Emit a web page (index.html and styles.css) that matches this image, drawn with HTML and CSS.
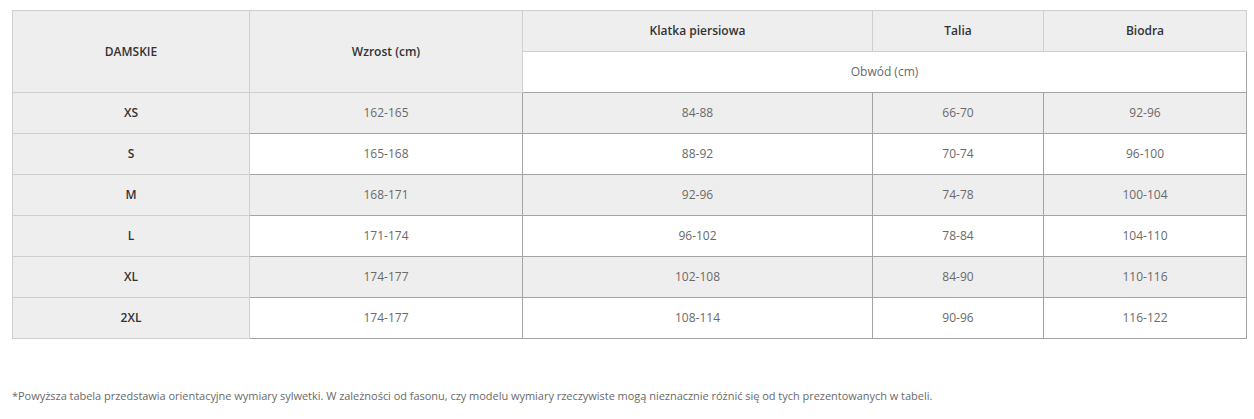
FILE: index.html
```html
<!DOCTYPE html>
<html lang="pl">
<head>
<meta charset="utf-8">
<title>Tabela rozmiarów</title>
<link rel="stylesheet" href="styles.css">
</head>
<body>
<div class="page">
  <table class="sizes">
    <colgroup>
      <col class="c1"><col class="c2"><col class="c3"><col class="c4"><col class="c5">
    </colgroup>
    <thead>
      <tr>
        <th rowspan="2">DAMSKIE</th>
        <th rowspan="2">Wzrost (cm)</th>
        <th>Klatka piersiowa</th>
        <th>Talia</th>
        <th>Biodra</th>
      </tr>
      <tr>
        <td colspan="3" class="unit">Obwód (cm)</td>
      </tr>
    </thead>
    <tbody>
      <tr class="odd"><th>XS</th><td>162-165</td><td>84-88</td><td>66-70</td><td>92-96</td></tr>
      <tr><th>S</th><td>165-168</td><td>88-92</td><td>70-74</td><td>96-100</td></tr>
      <tr class="odd"><th>M</th><td>168-171</td><td>92-96</td><td>74-78</td><td>100-104</td></tr>
      <tr><th>L</th><td>171-174</td><td>96-102</td><td>78-84</td><td>104-110</td></tr>
      <tr class="odd"><th>XL</th><td>174-177</td><td>102-108</td><td>84-90</td><td>110-116</td></tr>
      <tr><th>2XL</th><td>174-177</td><td>108-114</td><td>90-96</td><td>116-122</td></tr>
    </tbody>
  </table>
  <p class="note">*Powyższa tabela przedstawia orientacyjne wymiary sylwetki. W zależności od fasonu, czy modelu wymiary rzeczywiste mogą nieznacznie różnić się od tych prezentowanych w tabeli.</p>
</div>
</body>
</html>
```

FILE: styles.css
```css
html, body {
  margin: 0;
  padding: 0;
  background: #ffffff;
}

.page {
  padding: 10px 12px 0 12px;
  font-family: "Open Sans", "Liberation Sans", sans-serif;
}

.sizes {
  border-collapse: collapse;
  table-layout: fixed;
  width: 1234px;
}

.c1 { width: 237px; }
.c2 { width: 273px; }
.c3 { width: 350px; }
.c4 { width: 171px; }
.c5 { width: 203px; }

.sizes th,
.sizes td {
  height: 39px;
  padding: 0 0 1px 0;
  text-align: center;
  vertical-align: middle;
}

.sizes th {
  background: #eeeeee;
  border: 1px solid #cfcfcf;
  color: #333333;
  font-size: 12px;
  font-weight: 600;
}

.sizes td {
  border: 1px solid #a3a3a3;
  color: #6a6a6a;
  font-size: 12px;
  font-weight: 400;
  background: #ffffff;
}

.sizes tr.odd td {
  background: #eeeeee;
}

.sizes td.unit {
  background: #ffffff;
}

.note {
  margin: 49px 0 0 0;
  font-size: 11px;
  letter-spacing: -0.03px;
  color: #6a6a6a;
}
```
